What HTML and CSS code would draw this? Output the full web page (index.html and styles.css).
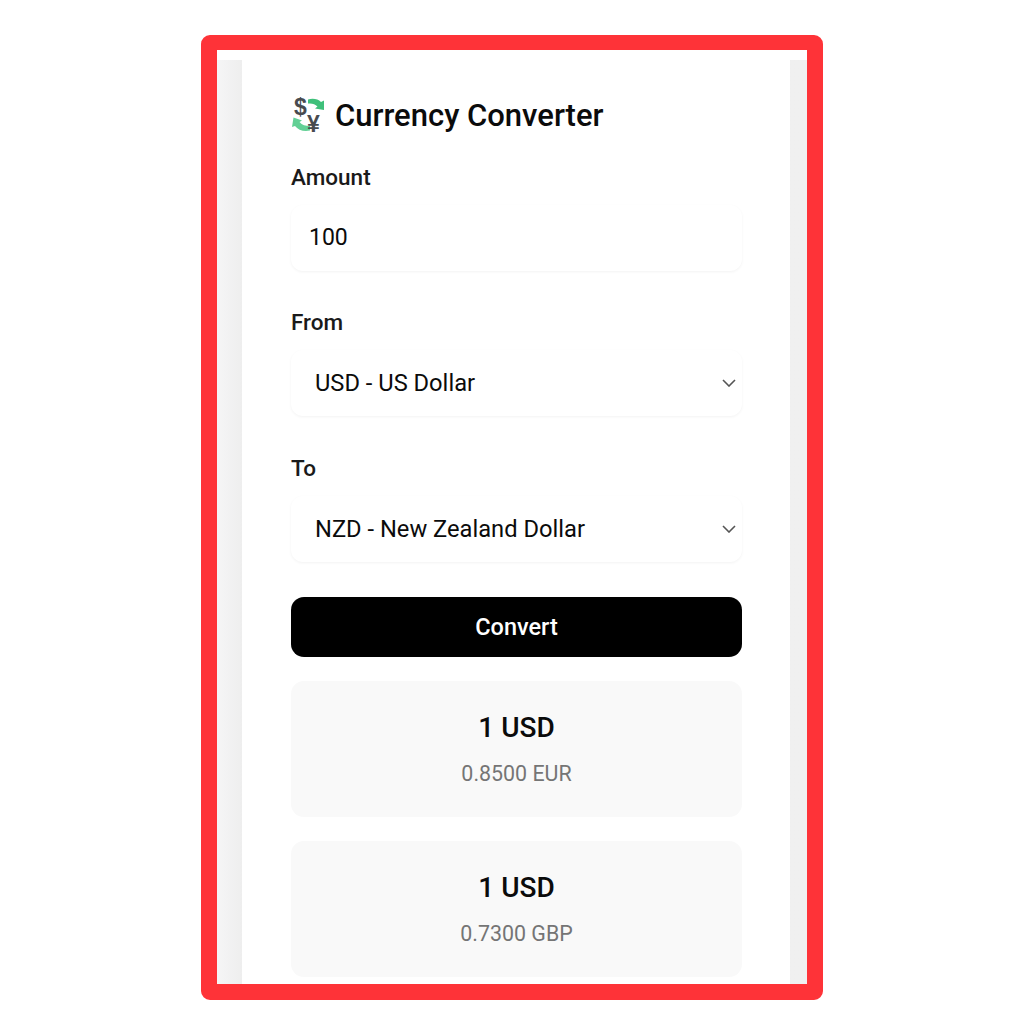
FILE: index.html
```html
<!DOCTYPE html>
<html lang="en">
<head>
    <meta charset="UTF-8">
    <meta name="viewport" content="width=device-width, initial-scale=1.0">
    <title>Currency Converter</title>
    <link rel="stylesheet" href="styles.css">
</head>
<body>
    <div class="frame">
        <div class="screen">
            <div class="panel">
                <h1 class="title">
                    <svg class="logo" viewBox="0 0 36 36" aria-hidden="true">
                        <path d="M17 2.500c5-1.500 10-.5 13 2.500l3-1.500 0 9.500-9-1.500 2.500-2c-2.500-2.500-5.500-3.500-9.500-3z" fill="#3fc07a"/>
                        <path d="M19 33.500c-6 1.500-12-.5-15-4.500l-3 1 1.500-9.500 8.500 3-2.500 1.500c2.500 3 6 4 10.500 4z" fill="#62d095"/>
                        <text x="3" y="18" class="logo-dollar">$</text>
                        <text x="16" y="35" class="logo-yen">¥</text>
                    </svg>
                    Currency Converter
                </h1>

                <label class="label">Amount</label>
                <div class="field field-input">100</div>

                <label class="label">From</label>
                <div class="field field-select">
                    <span>USD - US Dollar</span>
                    <svg class="chevron" viewBox="0 0 14 8"><path d="M1 1l6 6 6-6"/></svg>
                </div>

                <label class="label">To</label>
                <div class="field field-select">
                    <span>NZD - New Zealand Dollar</span>
                    <svg class="chevron" viewBox="0 0 14 8"><path d="M1 1l6 6 6-6"/></svg>
                </div>

                <button class="convert">Convert</button>

                <div class="rate">
                    <p class="rate-base">1 USD</p>
                    <p class="rate-value">0.8500 EUR</p>
                </div>
                <div class="rate">
                    <p class="rate-base">1 USD</p>
                    <p class="rate-value">0.7300 GBP</p>
                </div>
            </div>
        </div>
    </div>
</body>
</html>
```

FILE: styles.css
```css
* {
    box-sizing: border-box;
    margin: 0;
    padding: 0;
}

body {
    background-color: #fff;
    font-family: 'Roboto', sans-serif;
    color: #0b0b0b;
    height: 1024px;
    overflow: hidden;
    padding: 35px 0 0 201px;
}

.frame {
    width: 622px;
    height: 965px;
    border: 16px solid #fe3338;
    border-top-width: 15px;
    border-radius: 9px;
    background-color: #fff;
    padding-top: 10px;
    overflow: hidden;
}

.screen {
    height: 100%;
    padding: 0 0 0 25px;
    background: linear-gradient(90deg, #f5f5f6 0, #eeeeee 25px, #f0f0f0 100%);
}

.panel {
    width: 548px;
    height: 100%;
    background-color: #fff;
    padding: 32px 48px 0 49px;
    overflow: hidden;
}

.title {
    display: flex;
    align-items: center;
    gap: 8px;
    height: 46px;
    font-size: 31px;
    font-weight: 500;
    margin-bottom: 26px;
}

.logo {
    width: 36px;
    height: 36px;
    overflow: visible;
}

.logo-dollar,
.logo-yen {
    font-family: 'Liberation Sans', sans-serif;
    font-weight: 700;
    font-size: 23px;
    fill: #484b4f;
}

.label {
    display: block;
    font-size: 22.500px;
    font-weight: 500;
    line-height: 26px;
    color: #1a1a1a;
}

.field {
    display: flex;
    align-items: center;
    height: 66px;
    margin: 15px 0 39px;
    border-radius: 12px;
    background-color: #fff;
    box-shadow: 0 1px 3px rgba(0, 0, 0, 0.05);
    font-size: 23.700px;
}

.field-input {
    margin-bottom: 38px;
    padding: 0 0 2px 18px;
    font-size: 23px;
}

.field-select {
    justify-content: space-between;
    padding: 0 6px 0 24px;
}

.chevron {
    width: 14px;
    height: 8px;
    fill: none;
    stroke: #555;
    stroke-width: 1.600;
}

.convert {
    display: block;
    width: 100%;
    height: 60px;
    margin-top: -4px;
    border: none;
    border-radius: 13px;
    background-color: #000;
    color: #fff;
    font-family: inherit;
    font-size: 23.500px;
    font-weight: 500;
}

.rate {
    height: 136px;
    margin-top: 24px;
    padding-top: 29px;
    border-radius: 13px;
    background-color: #f9f9f9;
    text-align: center;
}

.rate-base {
    font-size: 28px;
    font-weight: 500;
    line-height: 36px;
}

.rate-value {
    margin-top: 15px;
    font-size: 21.400px;
    line-height: 26px;
    color: #757575;
}
```
